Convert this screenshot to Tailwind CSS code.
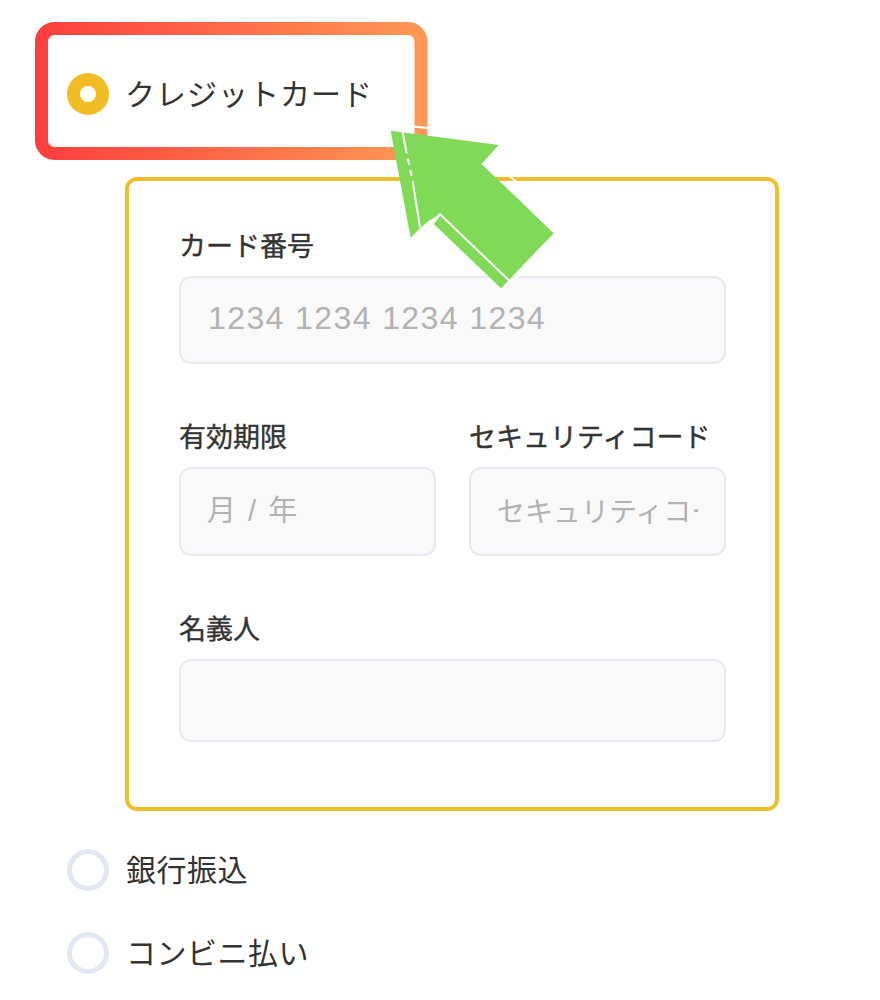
<!DOCTYPE html>
<html lang="ja">
<head>
  <meta charset="UTF-8" />
  <meta name="viewport" content="width=device-width, initial-scale=1.0" />
  <title>お支払い方法</title>
  <script src="https://cdn.jsdelivr.net/npm/@tailwindcss/browser@4"></script>
</head>
<body class="bg-white font-['Noto_Sans_CJK_JP','Noto_Sans',sans-serif] text-[#333]">
  <div class="relative w-[880px] h-[1000px] overflow-hidden pl-[67px] pt-[73px]">
    <!-- credit card -->
    <div class="flex items-center gap-[16px] h-[42px]">
      <span class="w-[42px] h-[42px] rounded-full border-[13px] border-[#f0bd24] bg-white"></span>
      <span class="pb-[4px] text-[30px] leading-[42px] tracking-[1px]">クレジットカード</span>
    </div>

    <div class="mt-[62px] ml-[58px] w-[654px] h-[634px] border-4 border-[#f0bd2c] rounded-[12px] pl-[50px] pr-[49px] pt-[44px]">
      <label class="block h-[40px] leading-[40px] text-[27px] [-webkit-text-stroke:0.4px]">カード番号</label>
      <input class="mt-[11px] block w-full h-[88px] pl-[27px] pr-[20px] pb-[3px] bg-[#f9f9fa] border-2 border-[#e6e9f3] rounded-[12px] font-['Liberation_Sans',sans-serif] text-[32px] tracking-[1.4px] outline-none placeholder:text-[#b2b2b2]" placeholder="1234 1234 1234 1234" />

      <div class="grid grid-cols-2 gap-x-[33px] mt-[52px]">
        <div>
          <label class="block h-[40px] leading-[40px] text-[27px] [-webkit-text-stroke:0.4px]">有効期限</label>
          <input class="mt-[11px] block w-full h-[89px] px-[26px] pb-[1px] bg-[#f9f9fa] border-2 border-[#e6e9f3] rounded-[12px] font-['Liberation_Sans','Noto_Sans_CJK_JP',sans-serif] text-[29px] [word-spacing:4px] outline-none placeholder:text-[#b2b2b2]" placeholder="月 / 年" />
        </div>
        <div>
          <label class="block h-[40px] leading-[40px] text-[27px] whitespace-nowrap [-webkit-text-stroke:0.4px]">セキュリティコード</label>
          <input class="mt-[11px] block w-full h-[89px] px-[26px] pb-[4px] bg-[#f9f9fa] border-2 border-[#e6e9f3] rounded-[12px] text-[28px] outline-none placeholder:text-[#b2b2b2]" placeholder="セキュリティコード" />
        </div>
      </div>

      <label class="block mt-[52px] h-[40px] leading-[40px] text-[27px] [-webkit-text-stroke:0.4px]">名義人</label>
      <input class="mt-[11px] block w-full h-[83px] px-[27px] bg-[#f9f9fa] border-2 border-[#e6e9f3] rounded-[12px] outline-none" />
    </div>

    <div class="flex items-center gap-[17px] h-[42px] mt-[38px]">
      <span class="w-[42px] h-[42px] rounded-full border-[5px] border-[#e2e7f3] bg-white"></span>
      <span class="pb-[4px] text-[30px] leading-[42px] tracking-[0.5px]">銀行振込</span>
    </div>
    <div class="flex items-center gap-[17px] h-[42px] mt-[41px]">
      <span class="w-[42px] h-[42px] rounded-full border-[5px] border-[#e2e7f3] bg-white"></span>
      <span class="pb-[4px] text-[30px] leading-[42px] tracking-[0.5px]">コンビニ払い</span>
    </div>

    <!-- annotation drawn on top of the screenshot -->
    <svg class="absolute left-0 top-0 w-[880px] h-[1000px]" viewBox="0 0 880 1000" fill="none">
      <defs>
        <linearGradient id="hl" gradientUnits="userSpaceOnUse" x1="35" y1="0" x2="428" y2="0">
          <stop offset="0" stop-color="#ff3d3d" />
          <stop offset="1" stop-color="#ff9a55" />
        </linearGradient>
      </defs>
      <rect x="41.5" y="28.5" width="379.5" height="125" rx="13" stroke="url(#hl)" stroke-width="13" />
      <path d="M413 126.5L428 128" stroke="#fff" stroke-width="2" />
      <path d="M509 176L517 182" stroke="#fff" stroke-width="2" />
      <path d="M510 283L520 275" stroke="#fff" stroke-width="2" />
      <g transform="translate(380 110) scale(0.3333)">
        <path d="M32 62L356 105L305 162L521 370L363 535L159 340L176 315L147 332L120 355L92 383Z" fill="#80da58" />
        <path d="M67 62L80 130M83 146L88 164M91 180L95 198M98 214L120 352" stroke="#fff" stroke-width="6" />
        <path d="M147 332L159 340L180 313L388 512" stroke="#fff" stroke-width="6" />
      </g>
    </svg>
  </div>
</body>
</html>
